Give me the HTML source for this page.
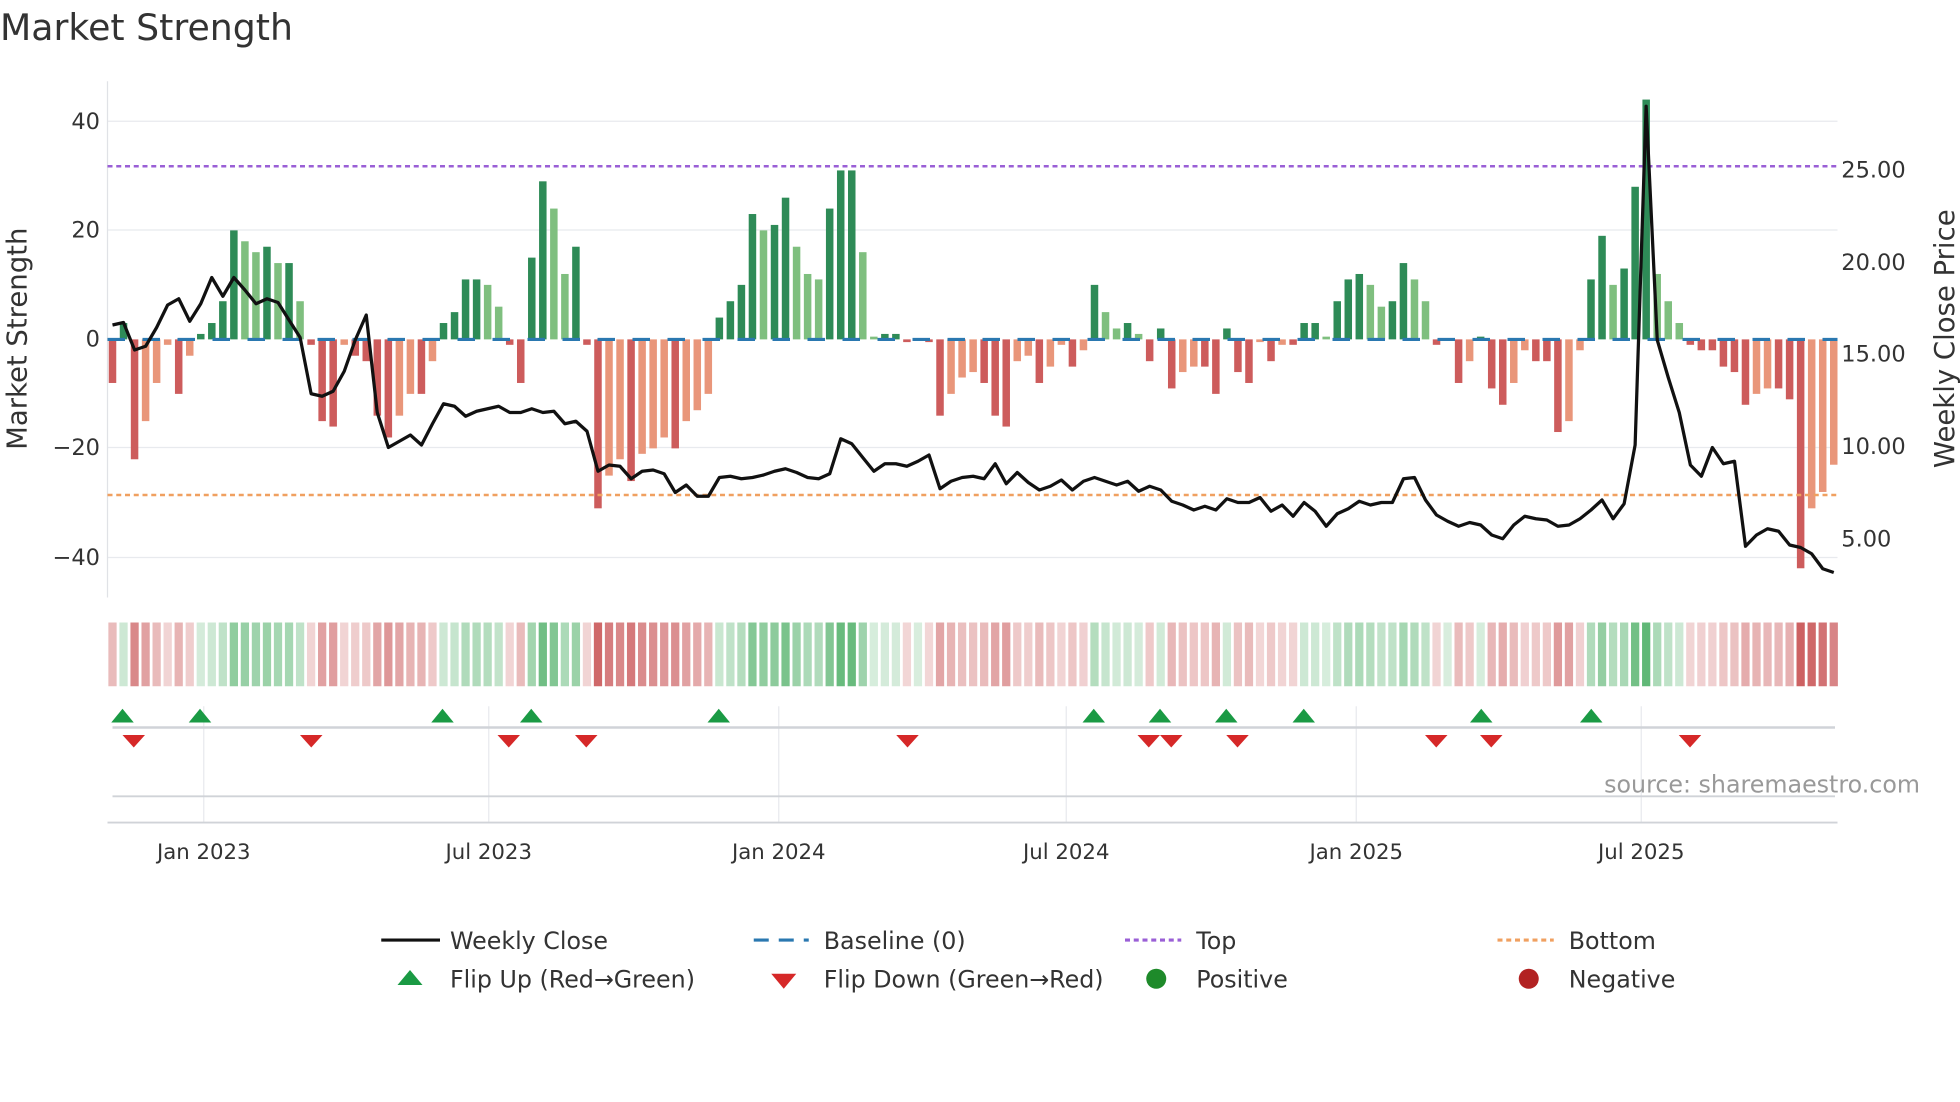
<!DOCTYPE html>
<html><head><meta charset="utf-8"><style>
html,body{margin:0;padding:0;background:#fff;}
svg{display:block;font-family:"DejaVu Sans","Liberation Sans",sans-serif;}
</style></head><body>
<svg id="s" width="1960" height="1102" viewBox="0 0 1568 881.6" xmlns="http://www.w3.org/2000/svg">
<rect width="1568" height="882" fill="#fff"/>
<text x="0" y="32" font-size="29" fill="#333">Market Strength</text>
<g id="grid" stroke="#e8eaee" stroke-width="1">
<line x1="86" x2="1470" y1="97" y2="97"/><line x1="86" x2="1470" y1="184" y2="184"/>
<line x1="86" x2="1470" y1="358" y2="358"/><line x1="86" x2="1470" y1="446" y2="446"/>
</g>
<line x1="86" x2="86" y1="65" y2="478" stroke="#e0e2e6"/>
<g id="bars"></g>
<line x1="86" x2="1470" y1="271.5" y2="271.5" stroke="#2a78b0" stroke-width="2.5" stroke-dasharray="14 14"/>
<line x1="86" x2="1470" y1="133" y2="133" stroke="#9a5fd6" stroke-width="2" stroke-dasharray="4 3"/>
<line x1="86" x2="1470" y1="396" y2="396" stroke="#f0a060" stroke-width="2" stroke-dasharray="4 3"/>
<polyline id="price" fill="none" stroke="#111" stroke-width="2.6" stroke-linejoin="round"/>
<g font-size="18" fill="#333" text-anchor="end">
<text x="80" y="103">40</text><text x="80" y="190">20</text><text x="80" y="277">0</text>
<text x="80" y="364">−20</text><text x="80" y="452">−40</text>
</g>
<g font-size="18" fill="#333">
<text x="1473" y="142">25.00</text><text x="1473" y="216">20.00</text><text x="1473" y="289">15.00</text>
<text x="1473" y="363">10.00</text><text x="1473" y="437">5.00</text>
</g>
<text transform="translate(21,271) rotate(-90)" font-size="22" fill="#333" text-anchor="middle">Market Strength</text>
<text transform="translate(1563,271) rotate(-90)" font-size="22" fill="#333" text-anchor="middle">Weekly Close Price</text>
<g id="strip"></g>
<g stroke="#e8eaee"><line x1="163" x2="163" y1="565" y2="658"/><line x1="391" x2="391" y1="565" y2="658"/><line x1="623" x2="623" y1="565" y2="658"/><line x1="853" x2="853" y1="565" y2="658"/><line x1="1085" x2="1085" y1="565" y2="658"/><line x1="1313" x2="1313" y1="565" y2="658"/></g>
<line x1="90" x2="1468" y1="582" y2="582" stroke="#d0d3d8" stroke-width="2"/>
<line x1="90" x2="1468" y1="637" y2="637" stroke="#d0d3d8" stroke-width="1.5"/>
<line x1="86" x2="1470" y1="658" y2="658" stroke="#d0d3d8" stroke-width="1.5"/>
<g id="marks"></g>
<text x="1536" y="634" font-size="19" fill="#999" text-anchor="end">source: sharemaestro.com</text>
<g font-size="17" fill="#333" text-anchor="middle">
<text x="163" y="687">Jan 2023</text><text x="391" y="687">Jul 2023</text><text x="623" y="687">Jan 2024</text>
<text x="853" y="687">Jul 2024</text><text x="1085" y="687">Jan 2025</text><text x="1313" y="687">Jul 2025</text>
</g>
<g stroke-width="2.5">
<line x1="305" x2="352" y1="752" y2="752" stroke="#111"/>
<line x1="603" x2="647" y1="752" y2="752" stroke="#2a78b0" stroke-dasharray="12 8"/>
<line x1="900" x2="945" y1="752" y2="752" stroke="#9a5fd6" stroke-dasharray="4 3"/>
<line x1="1198" x2="1243" y1="752" y2="752" stroke="#f0a060" stroke-dasharray="4 3"/>
</g>
<polygon points="318,788 338,788 328,776" fill="#1a9a44"/>
<polygon points="617,779 637,779 627,791" fill="#d62828"/>
<circle cx="925" cy="783" r="8" fill="#1e8a2a"/>
<circle cx="1223" cy="783" r="8" fill="#b22222"/>
<g font-size="19" fill="#333">
<text x="360" y="759">Weekly Close</text><text x="659" y="759">Baseline (0)</text><text x="957" y="759">Top</text><text x="1255" y="759">Bottom</text>
<text x="360" y="790">Flip Up (Red→Green)</text><text x="659" y="790">Flip Down (Green→Red)</text><text x="957" y="790">Positive</text><text x="1255" y="790">Negative</text>
</g>
</svg>
<script>
var V=[-8,3,-22,-15,-8,-1,-10,-3,1,3,7,20,18,16,17,14,14,7,-1,-15,-16,-1,-3,-4,-14,-18,-14,-10,-10,-4,3,5,11,11,10,6,-1,-8,15,29,24,12,17,-1,-31,-25,-22,-26,-21,-20,-18,-20,-15,-13,-10,4,7,10,23,20,21,26,17,12,11,24,31,31,16,0.5,1,1,-0.5,0,-0.5,-14,-10,-7,-6,-8,-14,-16,-4,-3,-8,-5,-1,-5,-2,10,5,2,3,1,-4,2,-9,-6,-5,-5,-10,2,-6,-8,-0.5,-4,-1,-1,3,3,0.5,7,11,12,10,6,7,14,11,7,-1,0,-8,-4,0.5,-9,-12,-8,-2,-4,-4,-17,-15,-2,11,19,10,13,28,44,12,7,3,-1,-2,-2,-5,-6,-12,-10,-9,-9,-11,-42,-31,-28,-23];
var P=[260,258,280,277,262,244,239,257,243,222,237,222,232,243,239,242,256,270,315,317,313,297,272,252,330,358,353,348,356,339,323,325,333,329,327,325,330,330,327,330,329,339,337,345,377,372,373,383,377,376,379,394,388,397,397,382,381,383,382,380,377,375,378,382,383,379,351,355,366,377,371,371,373,369,364,391,385,382,381,383,371,387,378,386,392,389,384,392,385,382,385,388,385,393,389,392,401,404,408,405,408,399,402,402,398,409,404,413,402,409,421,411,407,401,404,402,402,383,382,400,412,417,421,418,420,428,431,420,413,415,416,421,420,415,408,400,415,403,356,85,272,302,330,372,381,358,371,369,437,428,423,425,436,438,443,455,458];
var NS="http://www.w3.org/2000/svg";
function el(t,a,p){var e=document.createElementNS(NS,t);for(var k in a)e.setAttribute(k,a[k]);p.appendChild(e);return e;}
var n=V.length,dx=(1467-90)/(n-1);
var bars=document.getElementById('bars'),strip=document.getElementById('strip');
for(var i=0;i<n;i++){var v=V[i],x=90+i*dx,prev=i?V[i-1]:0;
 var strong=Math.abs(v)>=Math.abs(prev)||(prev*v<=0);
 var c=v>=0?(strong?'#2e8b57':'#7fbf7f'):(strong?'#cd5c5c':'#e9967a');
 var y0=271.5,y1=271.5-v*4.36;
 el('rect',{x:x-3,y:Math.min(y0,y1),width:6,height:Math.max(1,Math.abs(y1-y0)),fill:c},bars);
 var a=Math.min(0.8,0.2+Math.abs(v)/55);
 el('rect',{x:x-3.3,y:498,width:6.6,height:51,fill:v>=0?'#3aa655':'#c0393b','fill-opacity':a},strip);
}
var pts=[];for(var i=0;i<P.length;i++)pts.push((90+i*(1467-90)/(P.length-1)).toFixed(1)+','+P[i]);
document.getElementById('price').setAttribute('points',pts.join(' '));
var m=document.getElementById('marks');
[98,160,354,425,575,875,928,981,1043,1185,1273].forEach(function(x){el('polygon',{points:(x-9)+',578 '+(x+9)+',578 '+x+',567',fill:'#1a9a44'},m);});
[107,249,407,469,726,919,937,990,1149,1193,1352].forEach(function(x){el('polygon',{points:(x-9)+',588 '+(x+9)+',588 '+x+',598',fill:'#d62828'},m);});
</script>
</body></html>
